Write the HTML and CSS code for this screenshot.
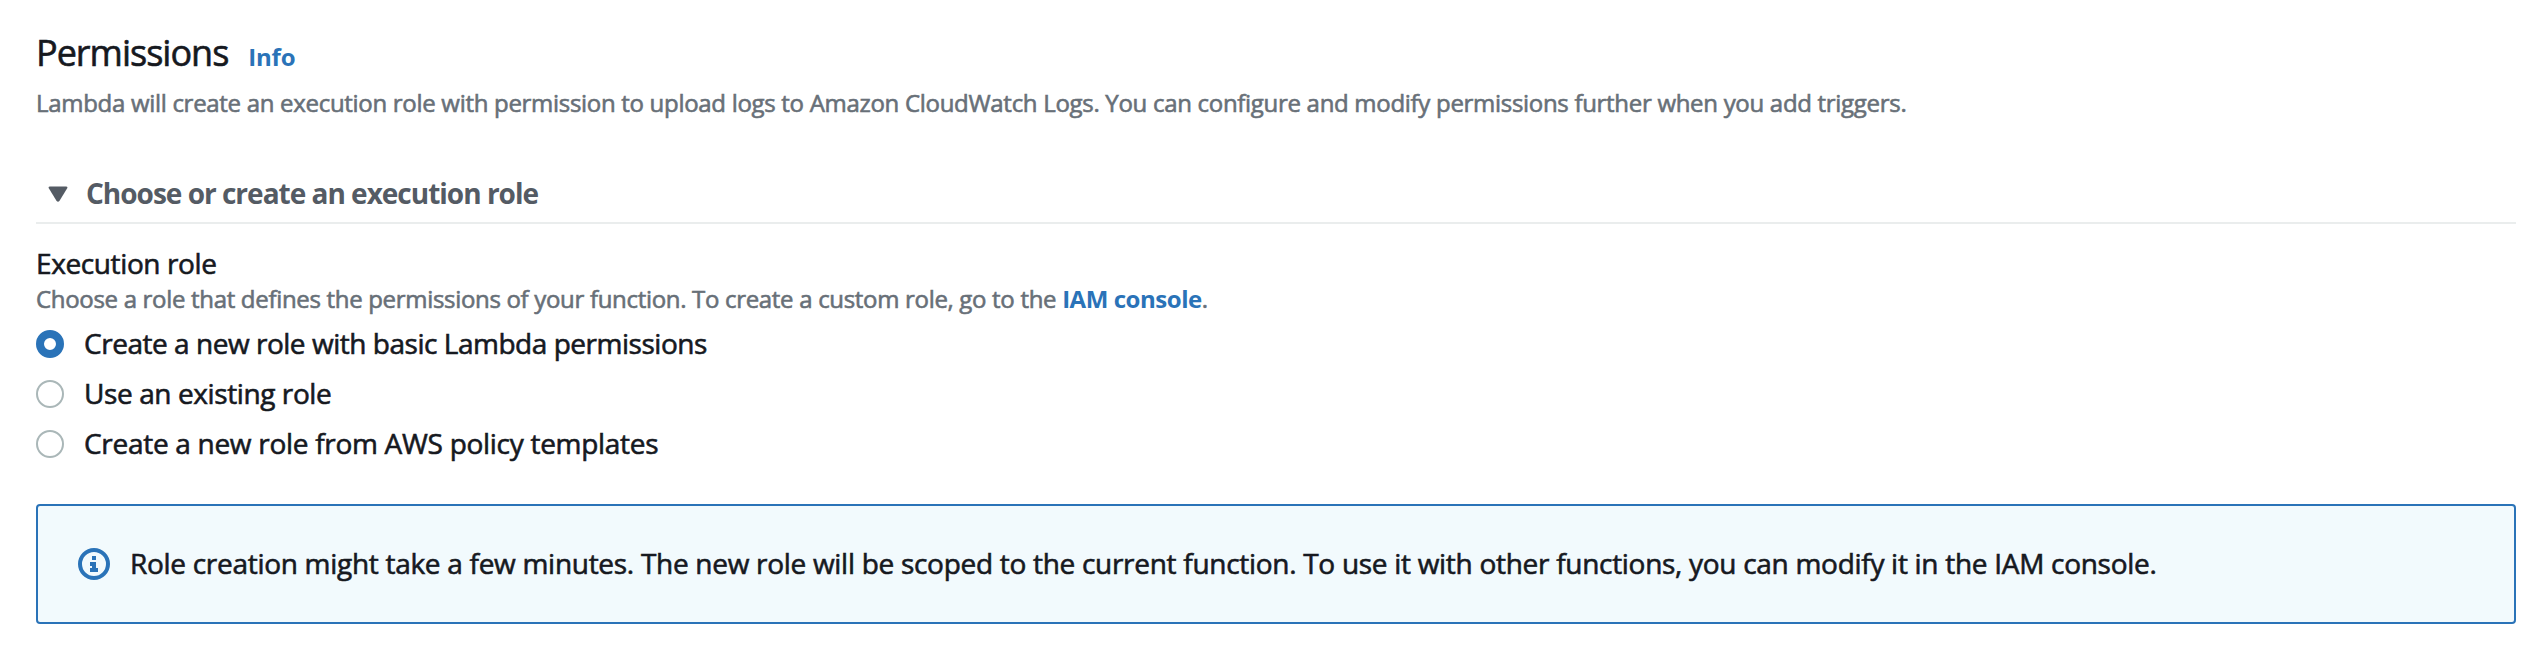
FILE: index.html
```html
<!DOCTYPE html>
<html lang="en">
<head>
<meta charset="utf-8">
<title>Permissions</title>
<link rel="stylesheet" href="styles.css">
</head>
<body>
<main class="panel">
  <header class="panel-header">
    <h2 class="title">Permissions</h2>
    <a class="link info-link">Info</a>
  </header>
  <p class="description">Lambda will create an execution role with permission to upload logs to Amazon CloudWatch Logs. You can configure and modify permissions further when you add triggers.</p>
  <div class="expander">
    <svg class="caret" viewBox="0 0 20 16"><path d="M2 .5h16q2 0 1.200 1.800L11.400 15q-1.400 1.600-2.800 0L.8 2.300Q0 .5 2 .5z" fill="#545b64"/></svg>
    <span class="expander-label">Choose or create an execution role</span>
  </div>
  <section class="field">
    <div class="field-label">Execution role</div>
    <div class="field-hint">Choose a role that defines the permissions of your function. To create a custom role, go to the <a class="link">IAM console</a>.</div>
    <div class="options">
      <label class="option"><span class="radio radio-checked"></span><span class="option-basic">Create a new role with basic Lambda permissions</span></label>
      <label class="option"><span class="radio"></span><span class="option-existing">Use an existing role</span></label>
      <label class="option"><span class="radio"></span><span class="option-template">Create a new role from AWS policy templates</span></label>
    </div>
  </section>
  <div class="alert">
    <svg class="alert-icon" viewBox="0 0 32 32"><circle cx="16" cy="16" r="14" fill="none" stroke="#2a73b8" stroke-width="4"/><path d="M14 8h4v4h-4zM12 14h6v6h2v4h-8v-4h2v-2h-2z" fill="#2a73b8"/></svg>
    <span class="alert-text">Role creation might take a few minutes. The new role will be scoped to the current function. To use it with other functions, you can modify it in the IAM console.</span>
  </div>
</main>
</body>
</html>
```

FILE: styles.css
```css
* { box-sizing: border-box; }
body {
  margin: 0;
  background: #fff;
  color: #16191f;
  font: 28px/36px "Open Sans", "Noto Sans", sans-serif;
  white-space: nowrap;
  -webkit-text-stroke: 0.6px currentColor;
}
.panel { padding: 31px 22px 24px 36px; }
.panel-header { display: flex; align-items: baseline; gap: 20px; }
.title { margin: 0; font-size: 36px; line-height: 44px; font-weight: 400; letter-spacing: -1px; }
.link { color: #2a73b8; font-weight: 700; letter-spacing: -0.45px; -webkit-text-stroke: 0; }
.info-link { font-size: 24px; letter-spacing: -0.2px; }
.description { margin: 10px 0 50px; font-size: 24px; color: #687078; letter-spacing: -0.3px; }
.expander {
  display: flex;
  align-items: center;
  gap: 18px;
  padding: 0 0 7px 12px;
  border-bottom: 2px solid #eaeded;
  color: #545b64;
  font-weight: 700;
  line-height: 44px;
  -webkit-text-stroke: 0;
}
.caret { width: 20px; height: 16px; margin-top: 2px; }
.expander-label { letter-spacing: -1px; }
.field { padding-top: 21px; }
.field-label { letter-spacing: -0.38px; }
.field-hint { font-size: 24px; color: #687078; letter-spacing: -0.315px; }
.options { display: flex; flex-direction: column; gap: 14px; padding-top: 8px; }
.option { display: flex; align-items: center; gap: 20px; }
.radio { width: 28px; height: 28px; margin-top: 2px; border: 2px solid #aab7b8; border-radius: 50%; background: #fff; }
.radio-checked { border: 8px solid #2a73b8; }
.option-basic { letter-spacing: -0.47px; }
.option-existing { letter-spacing: -0.4px; }
.option-template { letter-spacing: -0.29px; }
.alert {
  display: flex;
  align-items: center;
  gap: 20px;
  height: 120px;
  margin-top: 43px;
  padding: 0 40px 2px;
  border: 2px solid #2a73b8;
  border-radius: 4px;
  background: #f1faff;
  background: #f2fafd;
}
.alert-icon { width: 32px; height: 32px; margin-top: 2px; }
.alert-text { letter-spacing: -0.29px; }
```
